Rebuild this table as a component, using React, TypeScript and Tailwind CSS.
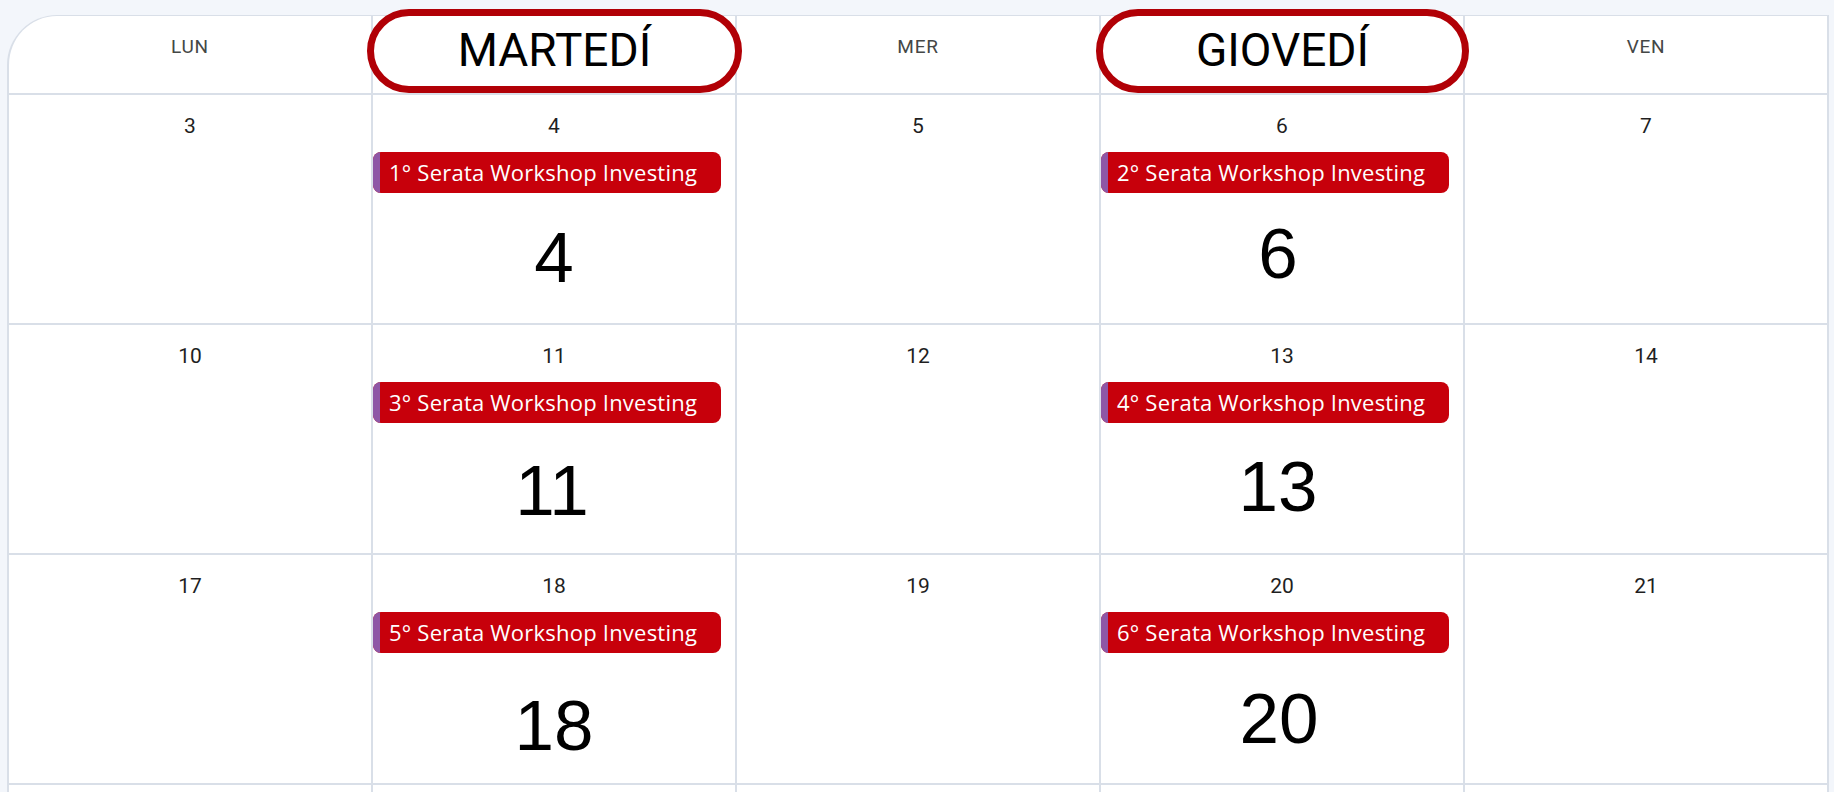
import React from 'react';

type Day = {
  n?: number;
  event?: string;
  bigClass?: string;
};

type Weekday = {
  short: string;
  full?: string;
  pillClass?: string;
};

const weekdays: Weekday[] = [
  { short: 'LUN' },
  { short: 'MAR', full: 'MARTEDÍ', pillClass: 'left-[-6px] w-[375px]' },
  { short: 'MER' },
  { short: 'GIO', full: 'GIOVEDÍ', pillClass: 'left-[-5px] w-[373px]' },
  { short: 'VEN' },
];

// big numbers were placed by hand in the original, so each one gets its own offset
const weeks: Day[][] = [
  [
    { n: 3 },
    { n: 4, event: '1° Serata Workshop Investing', bigClass: 'mt-[29px]' },
    { n: 5 },
    { n: 6, event: '2° Serata Workshop Investing', bigClass: 'mt-[25px] -translate-x-[4px]' },
    { n: 7 },
  ],
  [
    { n: 10 },
    { n: 11, event: '3° Serata Workshop Investing', bigClass: 'mt-[32px] -translate-x-[2px]' },
    { n: 12 },
    { n: 13, event: '4° Serata Workshop Investing', bigClass: 'mt-[28px] -translate-x-[4px]' },
    { n: 14 },
  ],
  [
    { n: 17 },
    { n: 18, event: '5° Serata Workshop Investing', bigClass: 'mt-[37px]' },
    { n: 19 },
    { n: 20, event: '6° Serata Workshop Investing', bigClass: 'mt-[30px] -translate-x-[3px]' },
    { n: 21 },
  ],
  // next week only peeks in at the bottom edge
  [{}, {}, {}, {}, {}],
];

const roboto = { fontFamily: 'Roboto, "Noto Sans", sans-serif' };

function HeaderCell({ day }: { day: Weekday }) {
  return (
    <div className="relative flex justify-center border-r-2 border-[#d9dfe8] pt-[19px]">
      {day.full ? (
        // red outline drawn over the header
        <div
          className={`absolute top-[-7px] z-10 flex h-[84px] items-center justify-center rounded-full border-[7px] border-[#b10006] bg-white pb-[3px] ${day.pillClass}`}
        >
          <span className="text-[46px] leading-none text-black">{day.full}</span>
        </div>
      ) : (
        <span className="text-[19px] leading-[24px] tracking-[0.04em] text-[#444746]">{day.short}</span>
      )}
    </div>
  );
}

function DayCell({ day }: { day: Day }) {
  return (
    <div className="flex flex-col items-center border-r-2 border-[#d9dfe8] pt-[17px]">
      {day.n && <span className="text-[21px] leading-[28px] text-[#1f1f1f]">{day.n}</span>}

      {day.event && (
        <>
          <div className="mt-[12px] flex h-[41px] w-[348px] self-start overflow-hidden rounded-[8px] bg-[#c7000b]">
            <span className="w-[7px] shrink-0 bg-[#8e57a6]" />
            <span
              className="flex items-center whitespace-nowrap pl-[9px] text-[22px] tracking-[0.01em] text-white"
              style={{ fontFamily: '"Open Sans", Roboto, sans-serif' }}
            >
              {day.event}
            </span>
          </div>
          <span
            className={`text-[71px] leading-none text-black ${day.bigClass}`}
            style={{ fontFamily: '"Liberation Sans", Arial, sans-serif' }}
          >
            {day.n}
          </span>
        </>
      )}
    </div>
  );
}

export default function App() {
  return (
    <div className="h-[792px] w-[1834px] overflow-hidden bg-[#f3f6fb] pl-[7px] pt-[15px]" style={roboto}>
      <div className="relative w-[1822px] rounded-tl-[50px] border-l-2 border-t border-[#d9dfe8] bg-white">
        <div className="grid h-[79px] grid-cols-[repeat(5,364px)] border-b-2 border-[#d9dfe8]">
          {weekdays.map((d) => (
            <HeaderCell key={d.short} day={d} />
          ))}
        </div>

        {weeks.map((week, i) => (
          <div key={i} className="grid h-[230px] grid-cols-[repeat(5,364px)] border-b-2 border-[#d9dfe8]">
            {week.map((day, j) => (
              <DayCell key={j} day={day} />
            ))}
          </div>
        ))}
      </div>
    </div>
  );
}
